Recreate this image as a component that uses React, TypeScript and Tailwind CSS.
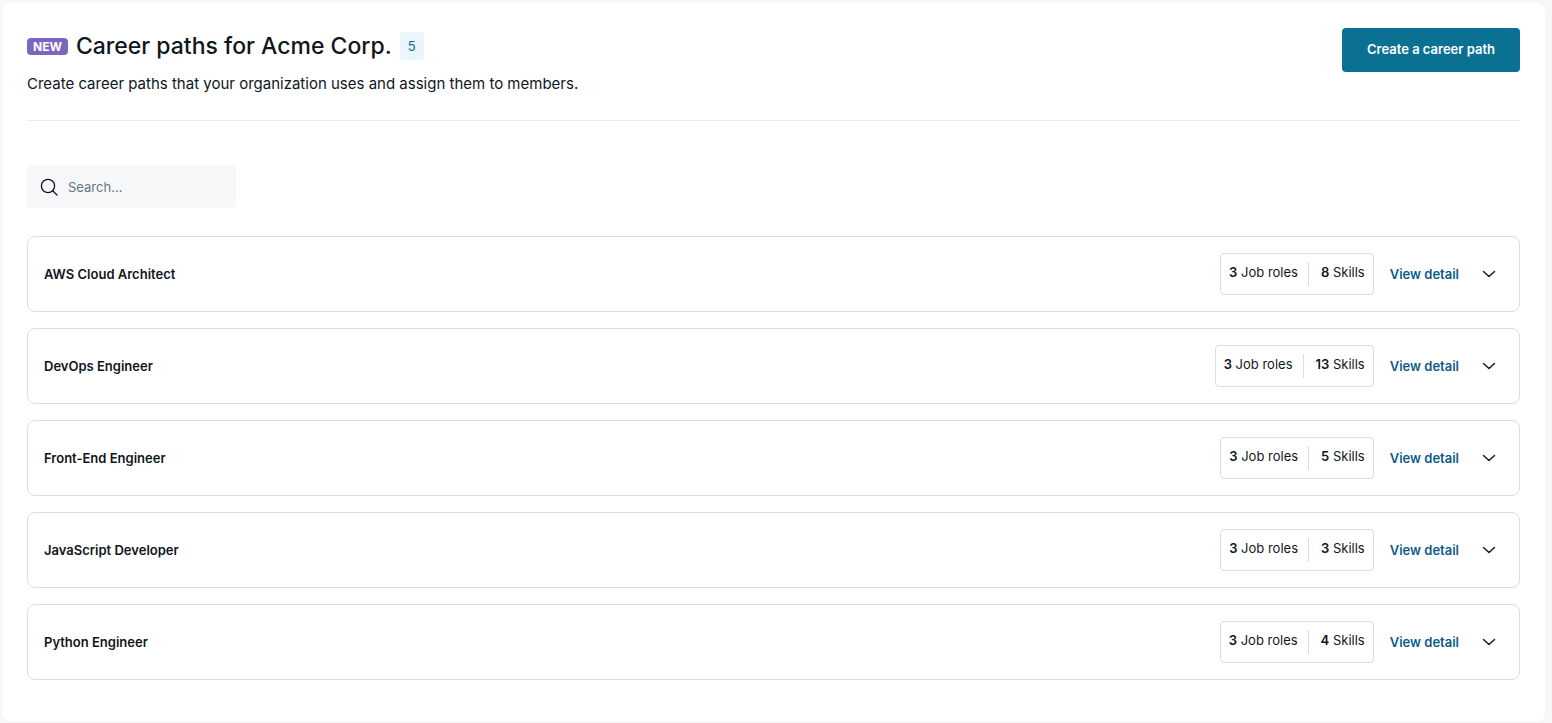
import { useState } from "react";

interface CareerPath {
  id: string;
  name: string;
  jobRoles: number;
  skills: number;
}

const careerPaths: CareerPath[] = [
  { id: "aws-cloud-architect", name: "AWS Cloud Architect", jobRoles: 3, skills: 8 },
  { id: "devops-engineer", name: "DevOps Engineer", jobRoles: 3, skills: 13 },
  { id: "front-end-engineer", name: "Front-End Engineer", jobRoles: 3, skills: 5 },
  { id: "javascript-developer", name: "JavaScript Developer", jobRoles: 3, skills: 3 },
  { id: "python-engineer", name: "Python Engineer", jobRoles: 3, skills: 4 }
];

function SearchIcon() {
  return (
    <svg width="18" height="18" viewBox="0 0 18 18" fill="none" stroke="currentColor" strokeWidth="1.3" aria-hidden="true">
      <circle cx="8" cy="8" r="6.6" />
      <path d="M12.7 12.7L17 17" strokeLinecap="round" />
    </svg>
  );
}

function ChevronIcon({ open }: { open: boolean }) {
  return (
    <svg
      width="14"
      height="8"
      viewBox="0 0 14 8"
      fill="none"
      stroke="currentColor"
      strokeWidth="1.4"
      strokeLinecap="round"
      strokeLinejoin="round"
      className={open ? "rotate-180" : ""}
      aria-hidden="true"
    >
      <path d="M1.5 1.4L7 6.6L12.5 1.4" />
    </svg>
  );
}

function CareerPathCard({ path }: { path: CareerPath }) {
  const [open, setOpen] = useState(false);

  return (
    <li className="rounded-lg border border-[#dcdde3] p-4">
      <div className="flex items-center gap-4">
        <h2 className="flex-1 text-[13px] leading-5 font-semibold">{path.name}</h2>
        <div className="flex rounded border border-[#dcdde3] p-2 text-[13px] leading-5">
          <span>
            <b className="font-semibold">{path.jobRoles}</b> Job roles
          </span>
          <span className="ml-2.5 h-6 border-l border-[#dcdde3] pl-3">
            <b className="font-semibold">{path.skills}</b> Skills
          </span>
        </div>
        <a href={`#${path.id}`} className="text-[13px] leading-5 font-semibold text-[#0d5c86]">
          View detail
        </a>
        <button
          type="button"
          aria-label={`Expand ${path.name}`}
          aria-expanded={open}
          onClick={() => setOpen(!open)}
          className="flex size-7 items-center justify-center"
        >
          <ChevronIcon open={open} />
        </button>
      </div>
      {open && (
        <p className="mt-4 text-[13px] leading-5">
          {path.jobRoles} Job roles, {path.skills} Skills
        </p>
      )}
    </li>
  );
}

export default function App() {
  const [search, setSearch] = useState("");
  const visiblePaths = careerPaths.filter((path) => path.name.toLowerCase().includes(search.trim().toLowerCase()));

  return (
    <div className="min-h-screen bg-[#f5f7f9] pt-[3px] pr-[7px] pb-0.5 pl-0.5 font-['Inter',sans-serif] text-[#10161d]">
      <main className="rounded-lg bg-white px-[25px] pt-[25px] pb-[41px]">
        {/* Header */}
        <header className="flex items-start justify-between border-b border-[#eaebed] pb-6">
          <div>
            <div className="flex items-center gap-2 pt-0.5">
              <span className="rounded bg-[#7d66c2] px-1.5 text-xs leading-[17px] font-bold text-white">NEW</span>
              <h1 className="text-[23px] leading-8 font-medium">Career paths for Acme Corp.</h1>
              <span className="rounded bg-[#eaf6fb] px-2 text-[13px] leading-7 text-[#1c6488]">5</span>
            </div>
            <p className="mt-2.5 text-[15px] leading-6">
              Create career paths that your organization uses and assign them to members.
            </p>
          </div>
          <button type="button" className="h-11 rounded bg-[#0a7192] px-[25px] text-[13px] font-semibold text-white">
            Create a career path
          </button>
        </header>

        {/* Search */}
        <label className="mt-11 flex h-[43px] w-[209px] items-center gap-2.5 rounded bg-[#f5f7f9] px-[13px]">
          <SearchIcon />
          <input
            type="text"
            value={search}
            onChange={(e) => setSearch(e.target.value)}
            placeholder="Search..."
            aria-label="Search career paths"
            className="min-w-0 flex-1 bg-transparent text-[13px] leading-5 outline-none placeholder:text-[#667684]"
          />
        </label>

        {/* Career paths */}
        <ul className="mt-7 space-y-4">
          {visiblePaths.map((path) => (
            <CareerPathCard key={path.id} path={path} />
          ))}
        </ul>
      </main>
    </div>
  );
}
